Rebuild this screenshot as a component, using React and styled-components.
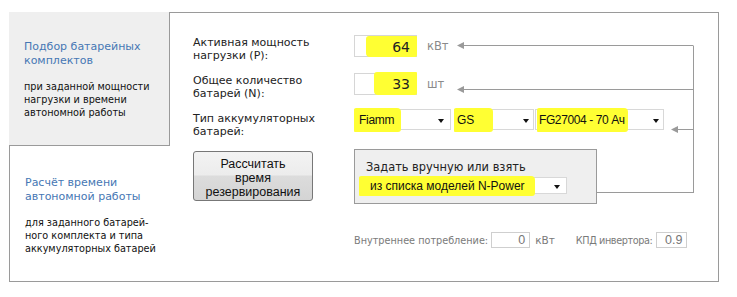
import React from "react";
import styled, { createGlobalStyle } from "styled-components";

const Global = createGlobalStyle`
  html, body { margin: 0; padding: 0; background: #fff; }
  body { font-family: "DejaVu Sans", Verdana, sans-serif; color: #222; }
`;

const LINE = "#9a9a9a";

const Page = styled.div`
  padding: 12px 0 0 9px;
`;

const Frame = styled.div`
  display: flex;
  width: 710px;
  height: 270px;
`;

const Sidebar = styled.div`
  width: 161px;
  display: flex;
  flex-direction: column;
`;

const Tab = styled.div`
  box-sizing: border-box;
  padding: ${(p) => (p.$active ? "30px 0 0 15px" : "28px 0 0 15px")};
  background: ${(p) => (p.$active ? "#fff" : "#efefef")};
  border-bottom: 1px solid ${LINE};
  border-right: ${(p) => (p.$active ? "none" : `1px solid ${LINE}`)};
  border-left: ${(p) => (p.$active ? `1px solid ${LINE}` : "none")};
  height: ${(p) => (p.$active ? "auto" : "134px")};
  flex: ${(p) => (p.$active ? "1" : "none")};
`;

const TabTitle = styled.div`
  font-size: 11px;
  line-height: 13.5px;
  color: #4677b4;
`;

const TabText = styled.div`
  margin-top: 12.5px;
  font-size: 9.7px;
  line-height: 13px;
  color: #111;
`;

const Main = styled.div`
  position: relative;
  box-sizing: border-box;
  flex: 1;
  border-top: 1px solid ${LINE};
  border-right: 1px solid ${LINE};
  border-bottom: 1px solid ${LINE};
  padding: 22px 0 0 23px;
  display: flex;
  flex-direction: column;
`;

const FieldRow = styled.div`
  display: flex;
  align-items: flex-start;
  height: 38px;
`;

const Label = styled.div`
  width: 161px;
  flex: none;
  padding-top: 2px;
  font-size: 11px;
  line-height: 12.5px;
  color: #222;
`;

const NumBox = styled.div`
  box-sizing: border-box;
  width: 63px;
  height: 22px;
  border: 1px solid #d6d6d6;
  background: #fff;
  display: flex;
  justify-content: flex-end;
  align-items: center;
`;

const NumMark = styled.span`
  display: flex;
  align-items: center;
  justify-content: flex-end;
  align-self: stretch;
  width: ${(p) => p.$w}px;
  margin-top: ${(p) => p.$t}px;
  margin-bottom: -1px;
  margin-right: -1px;
  padding-right: 7px;
  box-sizing: border-box;
  background: #ffff33;
  border-radius: 3px 1px 2px 4px;
  font-size: 14px;
  color: #222;
`;

const Unit = styled.span`
  margin-left: 10px;
  line-height: 22px;
  font-size: 11.5px;
  color: #8a8a8a;
`;

const Selects = styled.div`
  display: flex;
  margin-top: -2px;
`;

const Select = styled.div`
  box-sizing: border-box;
  width: ${(p) => p.$w}px;
  height: ${(p) => p.$h || 21}px;
  margin-right: ${(p) => p.$mr || 0}px;
  border: 1px solid #d8d8d8;
  background: #fff;
  display: flex;
  align-items: center;
  justify-content: space-between;
  font-family: "Liberation Sans", Arial, sans-serif;
  font-size: 12px;
  white-space: nowrap;
  color: #111;
`;

const SelMark = styled.span`
  box-sizing: border-box;
  align-self: stretch;
  display: flex;
  align-items: center;
  width: ${(p) => p.$w}px;
  margin: -2px 0 -3px ${(p) => p.$ml || -1}px;
  padding-left: ${(p) => p.$pl || 4}px;
  background: #ffff33;
  border-radius: 2px 4px 3px 1px;
  letter-spacing: ${(p) => p.$ls || 0}px;
`;

const Caret = styled.span`
  width: 0;
  height: 0;
  margin-right: ${(p) => p.$mr || 6}px;
  border-left: 3.5px solid transparent;
  border-right: 3.5px solid transparent;
  border-top: 4px solid #111;
  margin-top: 2px;
`;

const ActionRow = styled.div`
  display: flex;
  align-items: flex-start;
`;

const Button = styled.button`
  box-sizing: border-box;
  width: 120px;
  height: 50px;
  margin-top: 2px;
  padding: 3px 0 0;
  border: 1px solid #777;
  border-radius: 3px;
  background: linear-gradient(#f3f3f3 0%, #ececec 48%, #dcdcdc 50%, #d4d4d4 100%);
  font-family: "Liberation Sans", Arial, sans-serif;
  font-size: 12.5px;
  line-height: 14px;
  color: #111;
  text-align: center;
`;

const ChoiceBox = styled.div`
  box-sizing: border-box;
  width: 243px;
  height: 55px;
  margin-left: 41px;
  padding: 10px 0 0 4px;
  background: #efefef;
  border: 1px solid ${LINE};
`;

const ChoiceLabel = styled.div`
  padding-left: 7px;
  font-size: 11.4px;
  line-height: 14px;
  color: #222;
  margin-bottom: 3px;
`;

const BottomRow = styled.div`
  display: flex;
  align-items: center;
  margin: 28px 0 0 161px;
  font-size: 9.7px;
  color: #7a7a7a;
`;

const FieldName = styled.span`
  letter-spacing: ${(p) => p.$ls || 0}px;
`;

const SmallBox = styled.div`
  box-sizing: border-box;
  width: ${(p) => p.$w}px;
  height: 16px;
  margin-left: ${(p) => p.$ml || 3}px;
  padding-right: 4px;
  border: 1px solid #cfcfcf;
  background: #fff;
  display: flex;
  align-items: center;
  justify-content: flex-end;
  font-family: "Liberation Sans", Arial, sans-serif;
  font-size: 12.5px;
  color: #777;
`;

const SmallUnit = styled.span`
  margin-left: 5px;
  margin-right: 21px;
  font-size: 10.5px;
`;

const Wires = styled.svg`
  position: absolute;
  left: 0;
  top: 0;
  pointer-events: none;
`;

const Arrow = ({ x1, x2, y }) => (
  <g>
    <line x1={x1 + 2} y1={y + 0.5} x2={x2} y2={y + 0.5} stroke={LINE} strokeWidth="1" />
    <polygon points={`${x1},${y + 0.5} ${x1 + 7},${y - 3} ${x1 + 7},${y + 4}`} fill={LINE} />
  </g>
);

export default function App() {
  return (
    <>
      <Global />
      <Page>
        <Frame>
          <Sidebar>
            <Tab>
              <TabTitle>
                Подбор батарейных
                <br />
                комплектов
              </TabTitle>
              <TabText>
                при заданной мощности
                <br />
                нагрузки и времени
                <br />
                автономной работы
              </TabText>
            </Tab>
            <Tab $active>
              <TabTitle>
                Расчёт времени
                <br />
                автономной работы
              </TabTitle>
              <TabText>
                для заданного батарей-
                <br />
                ного комплекта и типа
                <br />
                аккумуляторных батарей
              </TabText>
            </Tab>
          </Sidebar>
          <Main>
            <Wires width="548" height="268" viewBox="0 0 548 268">
              <Arrow x1={287} x2={523} y={32} />
              <Arrow x1={287} x2={523} y={76} />
              <Arrow x1={501} x2={523} y={116} />
              <line x1="523.5" y1="32.5" x2="523.5" y2="179.5" stroke={LINE} strokeWidth="1" />
              <line x1="427" y1="179.5" x2="524" y2="179.5" stroke={LINE} strokeWidth="1" />
            </Wires>
            <FieldRow>
              <Label>
                Активная мощность
                <br />
                нагрузки (P):
              </Label>
              <NumBox>
                <NumMark $w={51} $t={0}>64</NumMark>
              </NumBox>
              <Unit>кВт</Unit>
            </FieldRow>
            <FieldRow>
              <Label>
                Общее количество
                <br />
                батарей (N):
              </Label>
              <NumBox>
                <NumMark $w={43} $t={-2}>33</NumMark>
              </NumBox>
              <Unit>шт</Unit>
            </FieldRow>
            <FieldRow>
              <Label>
                Тип аккумуляторных
                <br />
                батарей:
              </Label>
              <Selects>
                <Select $w={97} $mr={3}>
                  <SelMark $w={47} $pl={5} $ls={-0.3}>Fiamm</SelMark>
                  <Caret $mr={6} />
                </Select>
                <Select $w={80} $mr={1}>
                  <SelMark $w={39} $ml={0} $pl={3}>GS</SelMark>
                  <Caret $mr={4} />
                </Select>
                <Select $w={129}>
                  <SelMark $w={91} $ml={1} $pl={2} $ls={-0.4}>FG27004 - 70 Ач</SelMark>
                  <Caret $mr={4} />
                </Select>
              </Selects>
            </FieldRow>
            <ActionRow>
              <Button>
                Рассчитать
                <br />
                время
                <br />
                резервирования
              </Button>
              <ChoiceBox>
                <ChoiceLabel>Задать вручную или взять</ChoiceLabel>
                <Select $w={208} $h={17}>
                  <SelMark $w={176} $ml={-1} $pl={11}>из списка моделей N-Power</SelMark>
                  <Caret $mr={6} />
                </Select>
              </ChoiceBox>
            </ActionRow>
            <BottomRow>
              <FieldName>Внутреннее потребление:</FieldName>
              <SmallBox $w={39}>0</SmallBox>
              <SmallUnit>кВт</SmallUnit>
              <FieldName $ls={-0.4}>КПД инвертора:</FieldName>
              <SmallBox $w={31} $ml={4}>0.9</SmallBox>
            </BottomRow>
          </Main>
        </Frame>
      </Page>
    </>
  );
}
